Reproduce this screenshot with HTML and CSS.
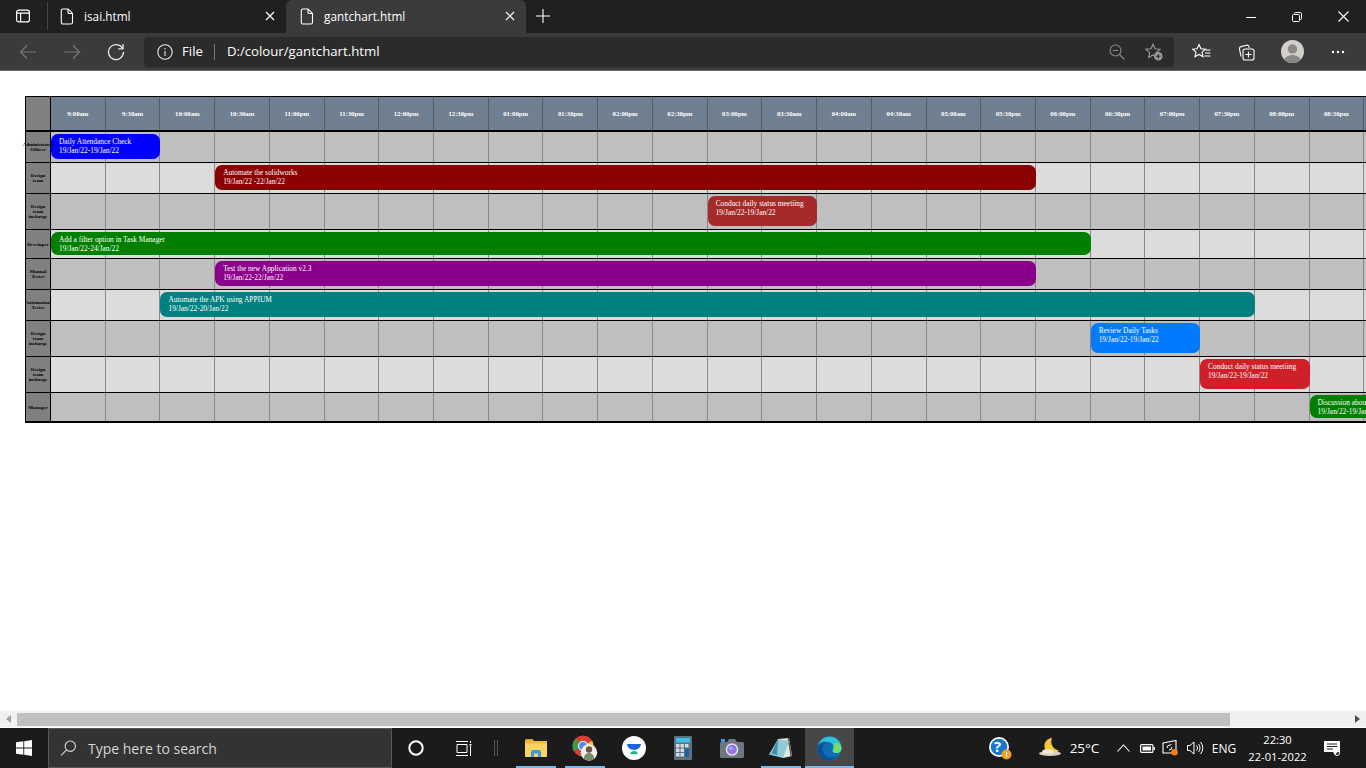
FILE: index.html
```html
<!DOCTYPE html>
<html lang="en">
<head>
  <meta charset="UTF-8" />
  <title>gantchart.html</title>
  <link rel="stylesheet" href="styles.css">
</head>
<body>
  <!-- browser window -->
  <div class="tabstrip">
    <div class="sidebar-btn">
      <svg width="16" height="16" viewBox="0 0 16 16" fill="none" stroke="#fff" stroke-width="1.2"><rect x="1.6" y="2.1" width="12.8" height="11.8" rx="2.2"/><path d="M1.6 5.2h12.8M5.6 5.2v8.7"/></svg>
    </div>
    <div class="tab">
      <svg class="doc-icon" width="14" height="17" viewBox="0 0 14 17" fill="none" stroke="#fff" stroke-width="1.1"><path d="M2.9 1h5.2l4.4 4.4v9a1.6 1.6 0 0 1-1.6 1.6H2.9a1.6 1.6 0 0 1-1.6-1.6V2.6A1.6 1.6 0 0 1 2.9 1zM8 1v3.2c0 .8.5 1.3 1.3 1.3h3.2"/></svg>
      <span class="tab-title">isai.html</span>
      <svg class="tab-close" width="10" height="10" viewBox="0 0 10 10" stroke="#fff" stroke-width="1.2"><path d="M1 1l8 8M9 1l-8 8"/></svg>
    </div>
    <div class="tab tab-active">
      <svg class="doc-icon" width="14" height="17" viewBox="0 0 14 17" fill="none" stroke="#fff" stroke-width="1.1"><path d="M2.9 1h5.2l4.4 4.4v9a1.6 1.6 0 0 1-1.6 1.6H2.9a1.6 1.6 0 0 1-1.6-1.6V2.6A1.6 1.6 0 0 1 2.9 1zM8 1v3.2c0 .8.5 1.3 1.3 1.3h3.2"/></svg>
      <span class="tab-title">gantchart.html</span>
      <svg class="tab-close" width="10" height="10" viewBox="0 0 10 10" stroke="#fff" stroke-width="1.2"><path d="M1 1l8 8M9 1l-8 8"/></svg>
    </div>
    <div class="new-tab">
      <svg width="14" height="14" viewBox="0 0 14 14" stroke="#fff" stroke-width="1.1"><path d="M7 0v14M0 7h14"/></svg>
    </div>
    <div class="win-btns">
      <div class="win-btn"><svg width="10" height="10" viewBox="0 0 10 10" stroke="#fff" stroke-width="1"><path d="M0 5.5h10"/></svg></div>
      <div class="win-btn"><svg width="10" height="10" viewBox="0 0 10 10" fill="none" stroke="#fff" stroke-width="1"><rect x=".5" y="2.5" width="7" height="7" rx="1"/><path d="M2.5 2.5v-1a1 1 0 0 1 1-1h5a1 1 0 0 1 1 1v5a1 1 0 0 1-1 1h-1"/></svg></div>
      <div class="win-btn"><svg width="11" height="11" viewBox="0 0 11 11" stroke="#fff" stroke-width="1.1"><path d="M.5.5l10 10M10.500.5l-10 10"/></svg></div>
    </div>
  </div>

  <div class="toolbar">
    <div class="tb-btn"><svg width="18" height="16" viewBox="0 0 18 16" fill="none" stroke="#777" stroke-width="1.2"><path d="M17 8H1.500M8 1.500L1.500 8 8 14.500"/></svg></div>
    <div class="tb-btn"><svg width="18" height="16" viewBox="0 0 18 16" fill="none" stroke="#777" stroke-width="1.2"><path d="M1 8h15.500M10 1.500L16.500 8 10 14.500"/></svg></div>
    <div class="tb-btn"><svg width="18" height="18" viewBox="0 0 18 18" fill="none" stroke="#e8e8e8" stroke-width="1.300"><path d="M15.600 5.500A7.500 7.500 0 1 0 16.500 9"/><path d="M16 1v4.800h-4.800"/></svg></div>
    <div class="address">
      <svg class="info-icon" width="16" height="16" viewBox="0 0 16 16" fill="none" stroke="#e8e8e8" stroke-width="1.100"><circle cx="8" cy="8" r="7.200"/><path d="M8 7v5"/><path d="M8 4v1.400"/></svg>
      <span class="addr-file">File</span>
      <span class="addr-sep"></span>
      <span class="addr-url">D:/colour/gantchart.html</span>
      <div class="addr-icons">
        <svg class="addr-zoom" width="16" height="16" viewBox="0 0 16 16" fill="none" stroke="#8a8a8a" stroke-width="1.100"><circle cx="6.500" cy="6.500" r="5.500"/><path d="M3.800 6.500h5.400M10.500 10.500l5 5"/></svg>
        <svg class="addr-star" width="18" height="18" viewBox="0 0 18 18"><path d="M8 1.200l2 4.600 5 .5-3.800 3.300 1.100 4.900L8 12l-4.300 2.500 1.100-4.900L1 6.300l5-.5z" fill="none" stroke="#9a9a9a" stroke-width="1.100"/><circle cx="13.300" cy="13.300" r="4.300" fill="#9a9a9a"/><path d="M13.300 11v4.600M11 13.300h4.600" stroke="#2b2b2b" stroke-width="1.100"/></svg>
      </div>
    </div>
    <div class="tb-btn tb-first"><svg width="20" height="18" viewBox="0 0 20 18" fill="none" stroke="#fff" stroke-width="1.100"><path d="M7 1.500l1.900 4.300 4.500.4-3.400 3 1 4.500L7 11.400l-4 2.300 1-4.500-3.400-3 4.500-.4zM13.500 7h5M13 10h5.500M12.500 13h6"/></svg></div>
    <div class="tb-btn"><svg width="18" height="18" viewBox="0 0 18 18" fill="none" stroke="#fff" stroke-width="1.100"><path d="M4 13.500L2.500 6A2 2 0 0 1 4 3.600L9.500 2.200a2 2 0 0 1 2.400 1.400L12.200 5"/><rect x="6" y="6" width="11" height="11" rx="2"/><path d="M11.500 8.500v6M8.500 11.500h6"/></svg></div>
    <div class="tb-btn tb-avatar">
      <svg width="23" height="23" viewBox="0 0 23 23"><clipPath id="avatarClip"><circle cx="11.500" cy="11.500" r="11.500"/></clipPath><circle cx="11.500" cy="11.500" r="11.500" fill="#d2cfca"/><g clip-path="url(#avatarClip)" fill="#8a8885"><circle cx="11.500" cy="9" r="4.700"/><ellipse cx="11.500" cy="21" rx="8.500" ry="6"/></g></svg>
    </div>
    <div class="tb-btn"><svg width="14" height="4" viewBox="0 0 14 4" fill="#fff"><circle cx="2" cy="2" r="1.200"/><circle cx="7" cy="2" r="1.200"/><circle cx="12" cy="2" r="1.200"/></svg></div>
  </div>

  <!-- the page itself -->
  <div class="page">
    <div class="gantt">
      <div class="gantt-row head-row">
        <div class="who"></div>
        <div class="track head-track">
          <div class="hour">9:00am</div>
          <div class="hour">9:30am</div>
          <div class="hour">10:00am</div>
          <div class="hour">10:30am</div>
          <div class="hour">11:00pm</div>
          <div class="hour">11:30pm</div>
          <div class="hour">12:00pm</div>
          <div class="hour">12:30pm</div>
          <div class="hour">01:00pm</div>
          <div class="hour">01:30pm</div>
          <div class="hour">02:00pm</div>
          <div class="hour">02:30pm</div>
          <div class="hour">03:00pm</div>
          <div class="hour">03:30am</div>
          <div class="hour">04:00am</div>
          <div class="hour">04:30am</div>
          <div class="hour">05:00am</div>
          <div class="hour">05:30pm</div>
          <div class="hour">06:00pm</div>
          <div class="hour">06:30pm</div>
          <div class="hour">07:00pm</div>
          <div class="hour">07:30pm</div>
          <div class="hour">08:00pm</div>
          <div class="hour">08:30pm</div>
          <div class="hour"></div>
          <div class="hour"></div>
        </div>
      </div>

      <div class="gantt-row row-mid shade-dark">
        <div class="who">Administrator Officer</div>
        <div class="track">
          <div class="task task-blue span-admin">Daily Attendance Check<br>19/Jan/22-19/Jan/22</div>
        </div>
      </div>
      <div class="gantt-row row-mid shade-light">
        <div class="who">Design team</div>
        <div class="track">
          <div class="task task-darkred span-long">Automate the solidworks<br>19/Jan/22 -22/Jan/22</div>
        </div>
      </div>
      <div class="gantt-row row-tall shade-dark">
        <div class="who">Design team incharge</div>
        <div class="track">
          <div class="task task-brown span-status">Conduct daily status meetiing<br>19/Jan/22-19/Jan/22</div>
        </div>
      </div>
      <div class="gantt-row row-low shade-light">
        <div class="who">Developer</div>
        <div class="track">
          <div class="task task-green span-dev">Add a filter option in Task Manager<br>19/Jan/22-24/Jan/22</div>
        </div>
      </div>
      <div class="gantt-row row-mid shade-dark">
        <div class="who">Manual Tester</div>
        <div class="track">
          <div class="task task-magenta span-long">Test the new Application v2.3<br>19/Jan/22-22/Jan/22</div>
        </div>
      </div>
      <div class="gantt-row row-mid shade-light">
        <div class="who">Automation Tester</div>
        <div class="track">
          <div class="task task-teal span-auto">Automate the APK using APPIUM<br>19/Jan/22-20/Jan/22</div>
        </div>
      </div>
      <div class="gantt-row row-tall shade-dark">
        <div class="who">Design team incharge</div>
        <div class="track">
          <div class="task task-sky span-review">Review Daily Tasks<br>19/Jan/22-19/Jan/22</div>
        </div>
      </div>
      <div class="gantt-row row-tall shade-light">
        <div class="who">Design team incharge</div>
        <div class="track">
          <div class="task task-red span-conduct">Conduct daily status meetiing<br>19/Jan/22-19/Jan/22</div>
        </div>
      </div>
      <div class="gantt-row row-low shade-dark row-last">
        <div class="who">Manager</div>
        <div class="track">
          <div class="task task-green span-talk">Discussion about the release<br>19/Jan/22-19/Jan/22</div>
        </div>
      </div>
    </div>
  </div>

  <div class="hscroll">
    <svg class="scroll-arrow" width="5" height="8" viewBox="0 0 5 8" fill="#a0a0a0"><path d="M5 0v8L0 4z"/></svg>
    <div class="scroll-thumb"></div>
    <svg class="scroll-arrow arrow-right" width="5" height="8" viewBox="0 0 5 8" fill="#505050"><path d="M0 0v8l5-4z"/></svg>
  </div>

  <!-- windows taskbar -->
  <div class="taskbar">
    <div class="start">
      <svg width="16" height="16" viewBox="0 0 17 17" fill="#fff"><path d="M0 2.500L7.800 1.300v6.800H0zM8.700 1.200L17 0v8.100H8.700zM0 9h7.800v6.800L0 14.600zM8.700 9H17v8l-8.300-1.200z"/></svg>
    </div>
    <div class="searchbox">
      <svg width="17" height="16" viewBox="0 0 18 18" fill="none" stroke="#ddd" stroke-width="1.200"><circle cx="11" cy="7" r="5.800"/><path d="M6.800 11.200L.8 17.200"/></svg>
      <span class="search-text">Type here to search</span>
    </div>
    <div class="task-slot"><svg width="16" height="16" viewBox="0 0 16 16" fill="none" stroke="#fff" stroke-width="2"><circle cx="8" cy="8" r="6.700"/></svg></div>
    <div class="task-slot"><svg width="16" height="15" viewBox="0 0 16 15" fill="none" stroke="#fff" stroke-width="1"><path d="M0 .5h12M0 14.500h12M1 3.500h10v8H1zM14.500 0v2M14.500 5v10"/><rect x="13.500" y="3" width="2" height="1.500" fill="#fff" stroke="none"/></svg></div>
    <div class="grip"><span></span><span></span></div>

    <div class="app app-open">
      <svg width="22" height="20" viewBox="0 0 22 20"><path d="M0 2.500A1.500 1.500 0 0 1 1.500 1h6l2 2.500H0z" fill="#e5a824"/><rect y="3" width="22" height="16" rx="1" fill="#fcd462"/><rect y="3" width="22" height="2.500" fill="#f0bb3e"/><path d="M6 19v-5a2 2 0 0 1 2-2h6a2 2 0 0 1 2 2v5h-3v-3.500H9V19z" fill="#3d9ae0"/></svg>
    </div>
    <div class="app app-open">
      <svg width="26" height="26" viewBox="0 0 26 26"><circle cx="11" cy="11" r="10.500" fill="#d93f35"/><path d="M11 11L1.900 16.200A10.500 10.500 0 0 1 3.500 3.600z" fill="#3b9a4a"/><path d="M11 11l9.100-5.200A10.500 10.500 0 0 1 11 21.500z" fill="#f5c431"/><circle cx="11" cy="11" r="5" fill="#fff"/><circle cx="11" cy="11" r="3.900" fill="#4a8af0"/><circle cx="17" cy="17.500" r="8.200" fill="#f4f2ee"/><circle cx="17" cy="14.500" r="3.200" fill="#6f5140"/><path d="M11.800 23.500c.5-4 2.500-5.500 5.200-5.500s4.700 1.500 5.200 5.500a8.200 8.200 0 0 1-10.400 0z" fill="#7d8a66"/></svg>
    </div>
    <div class="app">
      <svg width="24" height="24" viewBox="0 0 24 24"><circle cx="12" cy="12" r="12" fill="#fff"/><path d="M5 8h14a7 6 0 0 1-14 0z" fill="#1967e0"/><path d="M8 18c.5-2 2-3 4-3s3.500 1 4 3z" fill="#22b573"/></svg>
    </div>
    <div class="app">
      <svg width="18" height="24" viewBox="0 0 18 24"><rect width="18" height="24" rx="1" fill="#5c7180"/><rect x="2" y="2" width="14" height="4.500" fill="#3ec1ec"/><g fill="#d6dde2"><rect x="2" y="8" width="3.500" height="3.500"/><rect x="6.500" y="8" width="3.500" height="3.500"/><rect x="11" y="8" width="3.500" height="3.500"/><rect x="2" y="12.500" width="3.500" height="3.500"/><rect x="6.500" y="12.500" width="3.500" height="3.500"/><rect x="2" y="17" width="3.500" height="3.500"/><rect x="6.500" y="17" width="3.500" height="3.500"/></g><rect x="11" y="12.500" width="4" height="8.500" fill="#1d5fa8"/></svg>
    </div>
    <div class="app">
      <svg width="24" height="19" viewBox="0 0 24 19"><rect y="3" width="24" height="16" rx="1.500" fill="#6e7780"/><path d="M7 3l2-3h6l2 3z" fill="#6e7780"/><rect x="1" width="4" height="3" fill="#2f9be6"/><circle cx="12" cy="10.500" r="6.300" fill="#dfe3e8"/><circle cx="12" cy="10.500" r="4.800" fill="#a06fe0"/><circle cx="10.800" cy="9.300" r="1.700" fill="#7fc6ee"/></svg>
    </div>
    <div class="app app-open">
      <svg width="23" height="21" viewBox="0 0 23 21"><path d="M9 1l11-1 3 18-9 2z" fill="#dfe9ea"/><path d="M20 0l3 18-1.500.4L18.500.2z" fill="#6a5c4a"/><path d="M9 1L0 16.500 14 20l6-17z" fill="#8fcad6"/><path d="M9 1L2.500 15.500 8 17z" fill="#3f8ea1"/></svg>
    </div>
    <div class="app app-open app-current">
      <svg width="25" height="25" viewBox="0 0 25 25"><circle cx="12.500" cy="12.500" r="12" fill="#0f6db8"/><path d="M.8 10.500C2 4.500 7 .5 12.800.5 19.500.5 24.500 6 24.500 12c0 3-2 5-5 5-2 0-4-.8-4-2.200 0-1 1.200-1.300 1.200-3.300 0-3-2.500-5.500-6-5.500C6.500 6 2.500 7.500.8 10.500z" fill="#2fc2d8"/><path d="M17 8c3-2.500 6.500-.5 7.500 4 0 3-2 5-5 5-2 0-4-.8-4-2.200 0-1 1.200-1.300 1.200-3.300 0-1.300.1-2.500.3-3.500z" fill="#6ee06a"/><path d="M.5 12.500C.5 7.500 6 5 9.500 6 6.500 8 5 10.500 5.500 14c.6 4.500 5 8 9.500 7.500 2-.2 4-1 5.500-2.500-2 3.500-5 5.500-8.500 5.500C5.500 24.500.5 19 .5 12.500z" fill="#0b4f94"/></svg>
    </div>

    <div class="tray">
      <div class="tray-slot"><svg width="24" height="24" viewBox="0 0 24 24"><circle cx="11" cy="11" r="10" fill="#fff"/><circle cx="11" cy="11" r="8.300" fill="#1b75c9"/><circle cx="18.500" cy="18.500" r="5" fill="#f0a21f"/><rect x="18" y="16" width="1.100" height="5" fill="#fff"/></svg><span class="help-mark">?</span></div>
      <div class="tray-slot moon"><svg width="24" height="20" viewBox="0 0 24 20"><path d="M14 0a8 8 0 1 0 7 12.500A9 9 0 0 1 14 0z" fill="#f5c63a"/><ellipse cx="12" cy="15.500" rx="11" ry="2.500" fill="#d8d0c2"/><ellipse cx="10" cy="13.500" rx="6" ry="2.500" fill="#f1e8d8"/></svg></div>
      <div class="temp">25°C</div>
      <div class="tray-slot chevron"><svg width="13" height="8" viewBox="0 0 13 8" fill="none" stroke="#fff" stroke-width="1.100"><path d="M.5 7.500l6-6.500 6 6.500"/></svg></div>
      <div class="tray-slot"><svg width="15" height="9" viewBox="0 0 15 9"><rect x=".6" y=".6" width="12.300" height="7.800" rx="1" fill="none" stroke="#fff" stroke-width="1.200"/><rect x="2.500" y="2.500" width="8.500" height="4" fill="#fff"/><rect x="13.500" y="3" width="1.500" height="3" fill="#fff"/></svg></div>
      <div class="tray-slot"><svg width="18" height="16" viewBox="0 0 18 16"><path d="M1 3l13-2.500V13H1z" fill="none" stroke="#fff" stroke-width="1.100"/><path d="M5 8a3 3 0 0 1 3-3l1.500-.5M10 7a3 3 0 0 1-3 3" fill="none" stroke="#fff" stroke-width="1"/><circle cx="12.500" cy="12.300" r="3.300" fill="#f47c16"/></svg></div>
      <div class="tray-slot"><svg width="17" height="14" viewBox="0 0 17 14" fill="none" stroke="#fff" stroke-width="1"><path d="M.5 4.500h2.500L7 1v12L3 9.500H.5zM9.500 4.500a3.500 3.500 0 0 1 0 5M11.500 3a6 6 0 0 1 0 8M13.500 1a9 9 0 0 1 0 12"/></svg></div>
      <div class="lang">ENG</div>
      <div class="clock"><span>22:30</span><span>22-01-2022</span></div>
      <div class="notify"><svg width="16" height="15" viewBox="0 0 16 15"><path d="M0 0h16v11h-2.500L11 14 9 11H0z" fill="#fff"/><path d="M3 3h10M3 5.500h10M3 8h6" stroke="#1c1c1c" stroke-width="1"/><circle cx="13" cy="12" r="2.500" fill="none" stroke="#fff" stroke-width="1"/></svg></div>
    </div>
  </div>
</body>
</html>
```

FILE: styles.css
```css
html, body {
  margin: 0;
  padding: 0;
  height: 100%;
  overflow: hidden;
}
body {
  display: flex;
  flex-direction: column;
  height: 768px;
  background: #fff;
  font-family: "Open Sans", "Noto Sans", sans-serif;
}

/* tab strip */
.tabstrip {
  display: flex;
  flex: none;
  height: 33px;
  background: #202020;
  color: #fff;
}
.sidebar-btn {
  display: flex;
  align-items: center;
  justify-content: center;
  width: 48px;
  height: 28px;
  margin-top: 2px;
  padding-right: 2px;
  box-sizing: border-box;
  border-right: 1px solid #444;
}
.tab {
  display: flex;
  align-items: center;
  width: 238px;
  box-sizing: border-box;
  padding: 0 11px 1px 12px;
  font-size: 11.8px;
}
.tab-active {
  width: 240px;
  padding-left: 14px;
  padding-right: 11px;
  background: #3b3b3b;
  border-radius: 6px 6px 0 0;
}
.doc-icon {
  flex: none;
}
.tab-title {
  flex: 1;
  margin: 0 0 1px 10px;
  white-space: nowrap;
}
.tab-close {
  flex: none;
}
.new-tab {
  display: flex;
  align-items: center;
  justify-content: center;
  width: 34px;
  padding-bottom: 1px;
}
.win-btns {
  display: flex;
  margin-left: auto;
}
.win-btn {
  display: flex;
  align-items: center;
  justify-content: center;
  width: 46px;
}

/* address bar */
.toolbar {
  display: flex;
  flex: none;
  align-items: center;
  height: 37px;
  padding-left: 6px;
  background: #3b3b3b;
  border-bottom: 1px solid #686868;
  color: #fff;
}
.tb-btn {
  display: flex;
  align-items: center;
  justify-content: center;
  flex: none;
  width: 44px;
  height: 30px;
}
.tb-first {
  margin-left: 6px;
}
.tb-avatar {
  width: 48px;
}
.address {
  display: flex;
  align-items: center;
  flex: none;
  width: 1030px;
  height: 30px;
  margin-left: 6px;
  box-sizing: border-box;
  padding-left: 13px;
  background: #2b2b2b;
  border-radius: 4px;
  font-size: 13.2px;
}
.addr-file {
  margin: 0 0 1px 9px;
}
.addr-url {
  margin-bottom: 1px;
}
.addr-sep {
  width: 1px;
  height: 16px;
  margin: 0 12px 0 11px;
  background: #777;
}
.addr-icons {
  display: flex;
  align-items: center;
  margin-left: auto;
  margin-right: 11px;
  gap: 20px;
}

/* page area */
.page {
  flex: 1;
  overflow: hidden;
  padding: 25px 0 0 25px;
  background: #fff;
}
.gantt {
  width: 1500px;
  border-top: 1px solid #000;
  border-left: 1px solid #000;
  font-family: "Liberation Serif", serif;
}
.gantt-row {
  display: flex;
  border-bottom: 1px solid #000;
}
.head-row {
  height: 33px;
  border-bottom-width: 2px;
}
.row-mid {
  height: 30px;
}
.row-tall {
  height: 35px;
}
.row-low {
  height: 28px;
}
.row-last {
  border-bottom-width: 2px;
}
.who {
  display: flex;
  align-items: center;
  justify-content: center;
  flex: none;
  position: relative;
  z-index: 1;
  width: 24px;
  background: #808080;
  border-right: 1px solid #000;
  color: #000;
  font-size: 5px;
  font-weight: bold;
  line-height: 5px;
  text-align: center;
}
.track {
  display: grid;
  flex: none;
  grid-template-columns: repeat(26, 54.72px);
  grid-template-rows: 1fr;
  background-image: repeating-linear-gradient(90deg, transparent 0, transparent 53.72px, #888 53.72px, #888 54.72px);
}
.shade-dark .track {
  background-color: #bfbfbf;
}
.shade-light .track {
  background-color: #dcdcdc;
}
.head-track {
  background: #708090;
}
.hour {
  display: flex;
  align-items: center;
  justify-content: center;
  border-right: 1px solid #4f5f70;
  color: #fff;
  font-size: 6.7px;
  font-weight: bold;
}
.task {
  margin: 2px 0 3px;
  padding: 3px 0 0 8px;
  border-radius: 7px;
  color: #fff;
  font-size: 7.4px;
  line-height: 9px;
  white-space: nowrap;
  overflow: hidden;
}
.task-blue { background: #0000ff; }
.task-darkred { background: #8b0000; }
.task-brown { background: #a52a2a; }
.task-green { background: #008000; }
.task-magenta { background: #8b008b; }
.task-teal { background: #008080; }
.task-sky { background: #007bff; }
.task-red { background: #cf2029; }
.span-admin { grid-column: 1 / 3; }
.span-long { grid-column: 4 / 19; }
.span-status { grid-column: 13 / 15; }
.span-dev { grid-column: 1 / 20; }
.span-auto { grid-column: 3 / 23; }
.span-review { grid-column: 20 / 22; }
.span-conduct { grid-column: 22 / 24; }
.span-talk { grid-column: 24 / 26; }

/* horizontal scrollbar */
.hscroll {
  display: flex;
  flex: none;
  align-items: center;
  height: 16px;
  margin-bottom: 1px;
  padding: 0 6px;
  background: #f0f0f0;
}
.scroll-thumb {
  width: 1213px;
  height: 13px;
  margin: 1px 0 0 6px;
  background: #c0c0c0;
}
.arrow-right {
  margin-left: auto;
}

/* taskbar */
.taskbar {
  display: flex;
  flex: none;
  height: 40px;
  background: #1b1b1b;
  color: #fff;
}
.start {
  display: flex;
  align-items: center;
  justify-content: center;
  width: 48px;
}
.searchbox {
  display: flex;
  align-items: center;
  width: 344px;
  box-sizing: border-box;
  padding-left: 11px;
  background: #333;
  border: 1px solid #575757;
}
.search-text {
  margin-left: 11px;
  color: #d5d5d5;
  font-size: 14px;
}
.task-slot {
  display: flex;
  align-items: center;
  justify-content: center;
  width: 48px;
}
.grip {
  display: flex;
  align-items: center;
  width: 23px;
  gap: 2px;
  padding-left: 6px;
  box-sizing: border-box;
}
.grip span {
  width: 1px;
  height: 16px;
  background: #555;
}
.app {
  display: flex;
  align-items: center;
  justify-content: center;
  position: relative;
  width: 49px;
}
.app-open::after {
  content: "";
  position: absolute;
  left: 5px;
  right: 4px;
  bottom: 0;
  height: 2px;
  background: #76b9ed;
}
.app-current {
  background: #474747;
}
.app-current::after {
  left: 0;
  right: 0;
}
.tray {
  display: flex;
  margin-left: auto;
  padding-right: 16px;
  font-size: 12px;
}
.tray-slot {
  display: flex;
  align-items: center;
  justify-content: center;
  position: relative;
  width: 24px;
}
.help-mark {
  position: absolute;
  left: 6px;
  top: 8px;
  color: #fff;
  font-size: 15px;
  font-weight: bold;
  line-height: 20px;
}
.moon {
  margin-left: 26px;
}
.temp {
  display: flex;
  align-items: center;
  justify-content: center;
  width: 45px;
  font-size: 13.5px;
}
.chevron {
  margin-left: 4px;
}
.lang {
  display: flex;
  align-items: center;
  justify-content: center;
  width: 34px;
}
.clock {
  display: flex;
  flex-direction: column;
  align-items: center;
  justify-content: center;
  width: 73px;
  font-size: 11.2px;
  line-height: 17.5px;
}
.notify {
  display: flex;
  align-items: center;
  justify-content: center;
  width: 36px;
}
```
